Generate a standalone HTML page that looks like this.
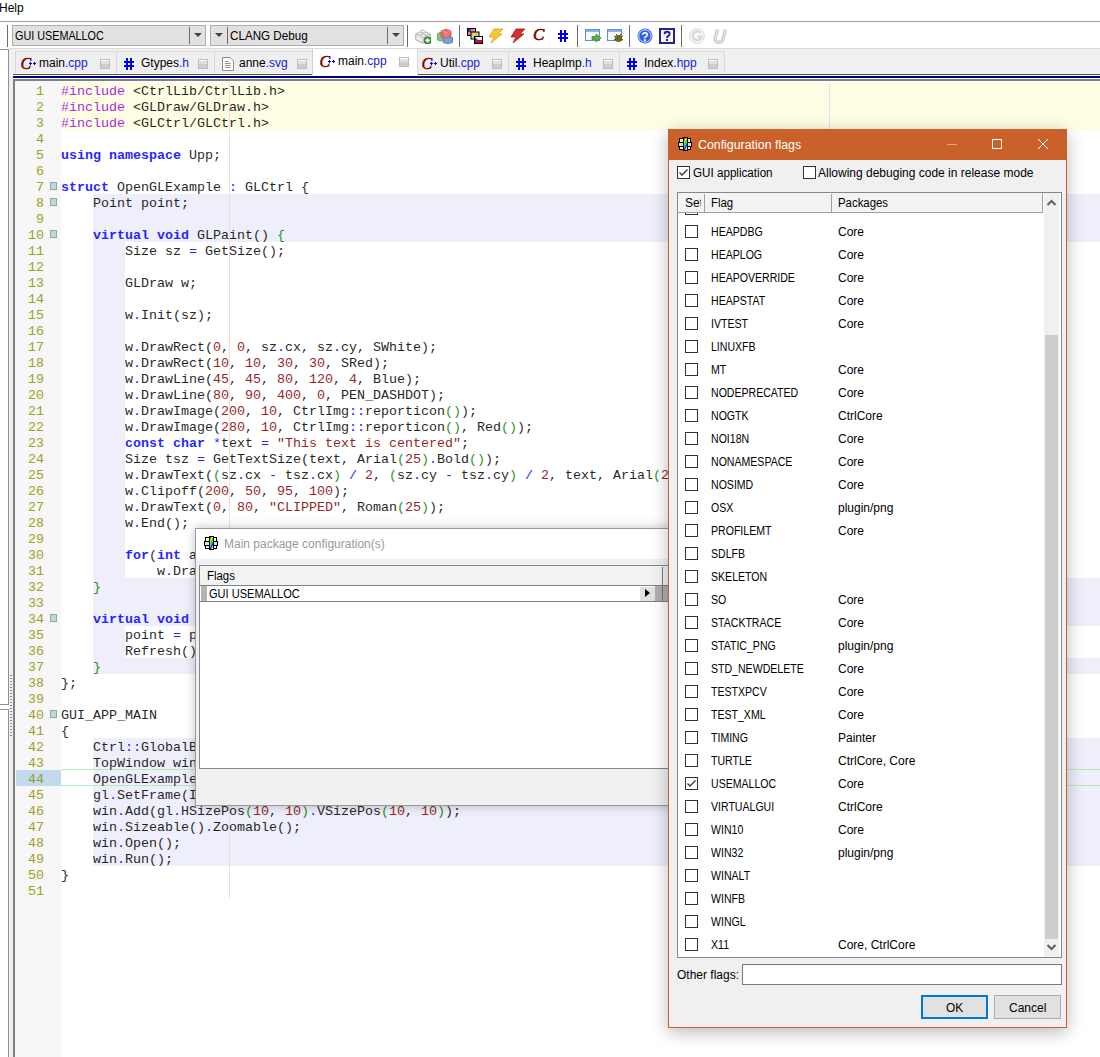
<!DOCTYPE html>
<html><head><meta charset="utf-8">
<style>
*{box-sizing:border-box}
html,body{margin:0;padding:0}
body{width:1100px;height:1057px;position:relative;overflow:hidden;background:#fff;font-family:"Liberation Sans",sans-serif;font-size:12px;color:#000}
.a{position:absolute}
.t{position:absolute;white-space:pre;line-height:14px;transform-origin:0 50%}
/* toolbar */
.combo{position:absolute;top:25px;height:21px;background:#e1e1e1;border:1px solid #adadad}
.vsep{position:absolute;width:1px;background:#6d6d6d}
.arr{position:absolute;width:0;height:0;border-left:4px solid transparent;border-right:4px solid transparent;border-top:4px solid #444}
/* tabs */
.tab{position:absolute;top:51px;height:23px;background:#efefef;border:1px solid #d9d9d9;border-top-color:#dcdcdc;border-bottom:1px solid #f8f8f8}
.tab.act{top:49px;height:26px;background:#fff;border-color:#d0d0d0;border-top:none;border-bottom:none}
.tabtxt{position:absolute;white-space:pre;line-height:14px;font-size:12px}
.tabtxt b{font-weight:normal;color:#1a1ad8}
.cls{position:absolute;width:10px;height:10px;border:1px solid #bdbdbd;background:linear-gradient(#fff 0,#fff 1px,#e0e0e0 1px,#e0e0e0 4px,#cdcdcd 4px)}
/* editor */
pre.code{position:absolute;left:61px;top:84px;margin:0;font-family:"Liberation Mono",monospace;font-size:13.333px;line-height:16px;color:#000;white-space:pre}
pre.code{opacity:.85}
pre.code i{font-style:normal}
pre.code i.kw{color:#0000ff;font-weight:bold}
pre.code i.pp{color:#9c00e6}
pre.code i.inc{color:#000}
pre.code i.num,pre.code i.str{color:#800000}
pre.code i.o{color:#0000ff}
pre.code i.g{color:#008000}
pre.ln{position:absolute;left:16px;top:84px;width:28px;margin:0;text-align:right;font-family:"Liberation Mono",monospace;font-size:13.333px;line-height:16px;color:#939000;white-space:pre;opacity:.85}
.mark{position:absolute;left:49px;width:8px;height:8px;background:#a6dada;border:1px solid #7aa}
/* dialogs */
.dlg{position:absolute;background:#f0f0f0}
.cb{position:absolute;width:13px;height:13px;border:1px solid #333;background:#fff}
.ft{position:absolute;white-space:pre;line-height:14px;font-size:12px;transform-origin:0 50%}
.fl{left:711px;transform:scaleX(.88)}
.pk{left:838px;transform:scaleX(1.0)}
</style></head><body>

<!-- menu bar -->
<div class="t" style="left:-1px;top:1px;">Help</div>
<div class="a" style="left:0;top:21px;width:1100px;height:1px;background:#a0a0a0"></div>

<!-- toolbar -->
<div class="vsep" style="left:7px;top:25px;height:22px"></div>
<div class="combo" style="left:12px;width:194px">
  <div class="t" style="left:2px;top:3px;transform:scaleX(.9)">GUI USEMALLOC</div>
  <div class="vsep" style="left:176px;top:1px;height:17px"></div>
  <div class="arr" style="left:181px;top:7px"></div>
</div>
<div class="combo" style="left:210px;width:194px">
  <div class="arr" style="left:4px;top:7px"></div>
  <div class="vsep" style="left:16px;top:1px;height:17px"></div>
  <div class="t" style="left:19px;top:3px;transform:scaleX(.97)">CLANG Debug</div>
  <div class="vsep" style="left:176px;top:1px;height:17px"></div>
  <div class="arr" style="left:181px;top:7px"></div>
</div>
<div class="vsep" style="left:407px;top:25px;height:22px"></div>
<svg class="a" style="left:415px;top:28px" width="16" height="16" viewBox="0 0 16 16"><path d="M0.8 6 L7.5 3.2 L15.2 6 L15.2 11.8 L8 15.2 L0.8 11.8 Z" fill="#ececec" stroke="#a8a8a8" stroke-width="1"/><path d="M0.8 6 L8 9 L15.2 6 M8 9 V15" stroke="#c4c4c4" fill="none"/><ellipse cx="4.6" cy="5.6" rx="2.3" ry="1.4" fill="#fafafa" stroke="#b0b0b0" stroke-width="0.8"/><ellipse cx="11.2" cy="5.6" rx="2.3" ry="1.4" fill="#fafafa" stroke="#b0b0b0" stroke-width="0.8"/><ellipse cx="7.9" cy="3.4" rx="2.3" ry="1.4" fill="#fafafa" stroke="#b0b0b0" stroke-width="0.8"/><ellipse cx="7.9" cy="7.6" rx="2.3" ry="1.4" fill="#fafafa" stroke="#b0b0b0" stroke-width="0.8"/><circle cx="12.6" cy="12.4" r="3.6" fill="#3c9a3c" stroke="#2a6e2a" stroke-width="0.8"/><path d="M10.4 12.4h4.4M12.6 10.2v4.4" stroke="#fff" stroke-width="1.6"/></svg>
<svg class="a" style="left:437px;top:28px" width="16" height="16" viewBox="0 0 16 16"><path d="M0.5 5.5 L3 4.5 L6.5 5.5 V12 L3 13 L0.5 12Z" fill="#86c286" stroke="#5a9a5a" stroke-width="0.8"/><path d="M6 9.5 L11 8 L15.5 9.5 V14.5 L11 15.8 L6 14.5Z" fill="#74a4d8" stroke="#4a7ab4" stroke-width="0.8"/><path d="M4 3 L9 1.2 L14 3 V8.5 L9 10 L4 8.5Z" fill="#ec6e6e" stroke="#c84848" stroke-width="0.8"/><path d="M4 3 L9 4.6 L14 3 M9 4.6V10" stroke="#f4a0a0" stroke-width="0.7" fill="none"/></svg>
<svg class="a" style="left:467px;top:28px" width="16" height="16" viewBox="0 0 16 16"><rect x="0.5" y="0.5" width="8" height="7" fill="#fff" stroke="#000"/><path d="M1 2h7M1 4h7M1 6h7" stroke="#d00"/><rect x="1" y="1" width="3" height="3" fill="#24a"/><rect x="4" y="4" width="8" height="7" fill="#9cf" stroke="#000"/><rect x="5" y="5" width="6" height="5" fill="#ec4"/><rect x="7.5" y="8.5" width="8" height="7" fill="#fff" stroke="#000"/><rect x="8" y="12" width="7" height="3" fill="#e00"/><path d="M8 9 L11 12 L8 15Z" fill="#24a"/></svg>
<svg class="a" style="left:488px;top:28px" width="16" height="16" viewBox="0 0 16 16"><path d="M6 1 H15 L10 6 H14 L3 15 L6 9 H1 Z" fill="#f4c830" stroke="#d8a020" stroke-width="0.8"/></svg>
<svg class="a" style="left:510px;top:28px" width="16" height="16" viewBox="0 0 16 16"><path d="M6 1 H15 L10 6 H14 L3 15 L6 9 H1 Z" fill="#d03030" stroke="#a02020" stroke-width="0.8"/></svg>
<div class="a" style="left:533px;top:26px;font-family:'Liberation Serif';font-style:italic;font-size:17px;line-height:18px;color:#7a0000;-webkit-text-stroke:0.6px #7a0000">C</div>
<svg class="a" style="left:558px;top:29px" width="11" height="14" viewBox="0 0 11 14"><path d="M3 1v12M7 1v12M0 5h10M0 9h10" stroke="#0000e8" stroke-width="2"/></svg>
<svg class="a" style="left:585px;top:29px" width="17" height="14" viewBox="0 0 17 14"><rect x="0.5" y="0.5" width="14" height="11" fill="#f4f8fc" stroke="#5b8fd0"/><rect x="1" y="1" width="13" height="2" fill="#8ab4e8"/><path d="M7 7.5 H11 V5 L16 9 L11 13 V10.5 H7Z" fill="#5cb040" stroke="#3a8a2a" stroke-width="0.8"/></svg>
<svg class="a" style="left:607px;top:29px" width="17" height="14" viewBox="0 0 17 14"><rect x="0.5" y="0.5" width="14" height="11" fill="#f4f8fc" stroke="#5b8fd0"/><rect x="1" y="1" width="13" height="2" fill="#8ab4e8"/><ellipse cx="11.5" cy="9.5" rx="3.5" ry="3.5" fill="#6b6a10"/><path d="M7 7l2 1M7 11l2-1M16 7l-2 1M16 11l-2-1M9 5l1.5 2M14 5l-1.5 2" stroke="#4a4a00"/></svg>
<svg class="a" style="left:637px;top:28px" width="16" height="16" viewBox="0 0 16 16"><circle cx="8" cy="8" r="7.5" fill="#2f5fe0"/><circle cx="8" cy="8" r="6.2" fill="none" stroke="#fff" stroke-width="0.8"/><text x="8" y="12.5" text-anchor="middle" font-family="Liberation Sans" font-weight="bold" font-size="12" fill="#fff">?</text></svg>
<svg class="a" style="left:659px;top:28px" width="16" height="16" viewBox="0 0 16 16"><rect x="1" y="1" width="14" height="14" fill="#f6f6ee" stroke="#24248c" stroke-width="2"/><path d="M5.6 6.2 Q5.6 3.8 8 3.8 Q10.6 3.8 10.6 6 Q10.6 7.4 9 8.2 Q8 8.7 8 10" fill="none" stroke="#24248c" stroke-width="2"/><rect x="7" y="11" width="2" height="2" fill="#24248c"/></svg>
<svg class="a" style="left:689px;top:28px" width="16" height="16" viewBox="0 0 16 16"><circle cx="8" cy="8" r="7.3" fill="#fafafa" stroke="#d4d4d4" stroke-width="1"/><path d="M11.6 5.2 A4.4 4.4 0 1 0 12.4 8.5 H8.2" fill="none" stroke="#d6d6d6" stroke-width="2.2"/><path d="M4.2 6 A4.4 4.4 0 0 0 6 11.8" fill="none" stroke="#d8e0d0" stroke-width="2.2"/><path d="M12.4 8.5 A4.4 4.4 0 0 1 9.5 12" fill="none" stroke="#d0d8e4" stroke-width="2.2"/></svg>
<svg class="a" style="left:712px;top:28px" width="15" height="16" viewBox="0 0 15 16"><path d="M5.5 1.5 L3.2 9.5 Q2.2 14.2 6.8 14.2 Q10.6 14.2 11.4 9.5 L13.4 1.5" fill="none" stroke="#d4cccc" stroke-width="3.6"/><path d="M5.5 1.5 L3.2 9.5 Q2.2 14.2 6.8 14.2 Q10.6 14.2 11.4 9.5 L13.4 1.5" fill="none" stroke="#eeeaea" stroke-width="1"/></svg>
<div class="vsep" style="left:459px;top:25px;height:22px"></div>
<div class="vsep" style="left:577px;top:25px;height:22px"></div>
<div class="vsep" style="left:629px;top:25px;height:22px"></div>
<div class="vsep" style="left:681px;top:25px;height:22px"></div>

<!-- left panel -->
<div class="a" style="left:0;top:49px;width:9px;height:656px;border:1px solid #8d9199;border-left:none;background:#fff"></div>
<div class="a" style="left:0;top:709px;width:9px;height:400px;border:1px solid #8d9199;border-left:none;background:#fff"></div>
<div class="a" style="left:9px;top:48px;width:4px;height:1009px;background:#f0f0f0"></div>

<!-- tab bar -->
<div class="a" style="left:9px;top:48px;width:1091px;height:1px;background:#dadada"></div>
<div class="a" style="left:9px;top:49px;width:1091px;height:25px;background:#f0f0f0"></div>
<div class="a" style="left:13px;top:75px;width:1087px;height:4px;background:#fff"></div>
<div class="tab" style="left:15px;width:102px"></div>
<svg class="a" style="left:21px;top:56px" width="17" height="15" viewBox="0 0 17 15"><text x="-0.5" y="12.6" style="font-family:'Liberation Serif';font-style:italic;font-size:16px" fill="#7a0000" stroke="#7a0000" stroke-width="0.5">C</text><path d="M8 7.5h3M9.5 6v3M12 7.5h3M13.5 6v3" stroke="#0000ff" stroke-width="1.1"/></svg>
<div class="tabtxt" style="left:39px;top:56px">main<b>.cpp</b></div>
<div class="cls" style="left:100px;top:59px"></div>
<div class="tab" style="left:116px;width:99px"></div>
<svg class="a" style="left:124px;top:57px" width="11" height="14" viewBox="0 0 11 14"><path d="M3 1v12M7 1v12M0 5h10M0 9h10" stroke="#0000e8" stroke-width="2"/></svg>
<div class="tabtxt" style="left:141px;top:56px">Gtypes<b>.h</b></div>
<div class="cls" style="left:198px;top:59px"></div>
<div class="tab" style="left:214px;width:99px"></div>
<svg class="a" style="left:222px;top:57px" width="12" height="14" viewBox="0 0 12 14"><path d="M0.5 0.5H8L11.5 4V13.5H0.5Z" fill="#fff" stroke="#8c8c8c" stroke-width="1"/><path d="M2.8 4.5h3.8M2.8 6.5h6M2.8 8.5h6M2.8 10.5h6" stroke="#8a8a8a" stroke-width="0.9"/></svg>
<div class="tabtxt" style="left:239px;top:56px">anne<b>.svg</b></div>
<div class="cls" style="left:297px;top:59px"></div>
<div class="tab act" style="left:312px;width:106px"></div>
<svg class="a" style="left:320px;top:54px" width="17" height="15" viewBox="0 0 17 15"><text x="-0.5" y="12.6" style="font-family:'Liberation Serif';font-style:italic;font-size:16px" fill="#7a0000" stroke="#7a0000" stroke-width="0.5">C</text><path d="M8 7.5h3M9.5 6v3M12 7.5h3M13.5 6v3" stroke="#0000ff" stroke-width="1.1"/></svg>
<div class="tabtxt" style="left:338px;top:54px">main<b>.cpp</b></div>
<div class="cls" style="left:399px;top:57px"></div>
<div class="tab" style="left:417px;width:92px"></div>
<svg class="a" style="left:422px;top:56px" width="17" height="15" viewBox="0 0 17 15"><text x="-0.5" y="12.6" style="font-family:'Liberation Serif';font-style:italic;font-size:16px" fill="#7a0000" stroke="#7a0000" stroke-width="0.5">C</text><path d="M8 7.5h3M9.5 6v3M12 7.5h3M13.5 6v3" stroke="#0000ff" stroke-width="1.1"/></svg>
<div class="tabtxt" style="left:440px;top:56px">Util<b>.cpp</b></div>
<div class="cls" style="left:492px;top:59px"></div>
<div class="tab" style="left:508px;width:112px"></div>
<svg class="a" style="left:516px;top:57px" width="11" height="14" viewBox="0 0 11 14"><path d="M3 1v12M7 1v12M0 5h10M0 9h10" stroke="#0000e8" stroke-width="2"/></svg>
<div class="tabtxt" style="left:533px;top:56px">HeapImp<b>.h</b></div>
<div class="cls" style="left:603px;top:59px"></div>
<div class="tab" style="left:619px;width:106px"></div>
<svg class="a" style="left:627px;top:57px" width="11" height="14" viewBox="0 0 11 14"><path d="M3 1v12M7 1v12M0 5h10M0 9h10" stroke="#0000e8" stroke-width="2"/></svg>
<div class="tabtxt" style="left:644px;top:56px">Index<b>.hpp</b></div>
<div class="cls" style="left:708px;top:59px"></div>
<div class="a" style="left:13px;top:74px;width:299px;height:1px;background:#505050"></div>
<div class="a" style="left:418px;top:74px;width:682px;height:1px;background:#505050"></div>
<div class="a" style="left:13px;top:76px;width:1087px;height:2px;background:#000080"></div>
<div class="a" style="left:10px;top:674px;width:2px;height:62px;background:repeating-linear-gradient(#f0f0f0 0 1px,#8a8a8a 1px 2px,#f0f0f0 2px 3px)"></div>

<!-- editor -->
<div class="a" style="left:13px;top:79px;width:1087px;height:978px;border-left:2px solid #7c8088;border-top:2px solid #7c8088;background:#fff"></div>
<div class="a" style="left:15px;top:81px;width:46px;height:976px;background:#f7f7f7"></div>
<div class="a" style="left:61px;top:82px;width:1039px;height:48px;background:#fefee4"></div>
<div class="a" style="left:93px;top:194px;width:1007px;height:480px;background:#efeffc"></div>
<div class="a" style="left:125px;top:242px;width:975px;height:336px;background:#fff"></div>
<div class="a" style="left:125px;top:626px;width:975px;height:32px;background:#fff"></div>
<div class="a" style="left:93px;top:738px;width:1007px;height:128px;background:#efeffc"></div>
<div class="a" style="left:61px;top:769px;width:1039px;height:1px;background:#b8e8b8"></div>
<div class="a" style="left:61px;top:785px;width:1039px;height:1px;background:#b8e8b8"></div>
<div class="a" style="left:16px;top:770px;width:45px;height:16px;background:#c3d9ee"></div>
<div class="a" style="left:229px;top:82px;width:1px;height:816px;background:#f5dcd6"></div>
<div class="a" style="left:829px;top:82px;width:1px;height:816px;background:#e2e2ec"></div>
<pre class="ln">1
2
3
4
5
6
7
8
9
10
11
12
13
14
15
16
17
18
19
20
21
22
23
24
25
26
27
28
29
30
31
32
33
34
35
36
37
38
39
40
41
42
43
44
45
46
47
48
49
50
51</pre>
<div class="a" style="left:50px;top:182px;width:7px;height:8px;border:1px solid #a0a0a0;background:#a8e0e0"></div>
<div class="a" style="left:50px;top:198px;width:7px;height:8px;border:1px solid #a0a0a0;background:#a8e0e0"></div>
<div class="a" style="left:50px;top:230px;width:7px;height:8px;border:1px solid #a0a0a0;background:#a8e0e0"></div>
<div class="a" style="left:50px;top:614px;width:7px;height:8px;border:1px solid #a0a0a0;background:#a8e0e0"></div>
<div class="a" style="left:50px;top:710px;width:7px;height:8px;border:1px solid #a0a0a0;background:#a8e0e0"></div>
<pre class="code"><i class="pp">#include</i> <i class="inc">&lt;CtrlLib/CtrlLib.h&gt;</i>
<i class="pp">#include</i> <i class="inc">&lt;GLDraw/GLDraw.h&gt;</i>
<i class="pp">#include</i> <i class="inc">&lt;GLCtrl/GLCtrl.h&gt;</i>

<i class="kw">using</i> <i class="kw">namespace</i> Upp;

<i class="kw">struct</i> OpenGLExample <i class="o">:</i> GLCtrl {
    Point point;

    <i class="kw">virtual</i> <i class="kw">void</i> GLPaint() <i class="g">{</i>
        Size sz <i class="o">=</i> GetSize();

        GLDraw w;

        w<i class="o">.</i>Init(sz);

        w<i class="o">.</i>DrawRect(<i class="num">0</i>, <i class="num">0</i>, sz<i class="o">.</i>cx, sz<i class="o">.</i>cy, SWhite);
        w<i class="o">.</i>DrawRect(<i class="num">10</i>, <i class="num">10</i>, <i class="num">30</i>, <i class="num">30</i>, SRed);
        w<i class="o">.</i>DrawLine(<i class="num">45</i>, <i class="num">45</i>, <i class="num">80</i>, <i class="num">120</i>, <i class="num">4</i>, Blue);
        w<i class="o">.</i>DrawLine(<i class="num">80</i>, <i class="num">90</i>, <i class="num">400</i>, <i class="num">0</i>, PEN_DASHDOT);
        w<i class="o">.</i>DrawImage(<i class="num">200</i>, <i class="num">10</i>, CtrlImg<i class="o">:</i><i class="o">:</i>reporticon<i class="g">(</i><i class="g">)</i>);
        w<i class="o">.</i>DrawImage(<i class="num">280</i>, <i class="num">10</i>, CtrlImg<i class="o">:</i><i class="o">:</i>reporticon<i class="g">(</i><i class="g">)</i>, Red<i class="g">(</i><i class="g">)</i>);
        <i class="kw">const</i> <i class="kw">char</i> <i class="o">*</i>text <i class="o">=</i> <i class="str">&quot;This text is centered&quot;</i>;
        Size tsz <i class="o">=</i> GetTextSize(text, Arial<i class="g">(</i><i class="num">25</i><i class="g">)</i><i class="o">.</i>Bold<i class="g">(</i><i class="g">)</i>);
        w<i class="o">.</i>DrawText(<i class="g">(</i>sz<i class="o">.</i>cx <i class="o">-</i> tsz<i class="o">.</i>cx<i class="g">)</i> <i class="o">/</i> <i class="num">2</i>, <i class="g">(</i>sz<i class="o">.</i>cy <i class="o">-</i> tsz<i class="o">.</i>cy<i class="g">)</i> <i class="o">/</i> <i class="num">2</i>, text, Arial<i class="g">(</i><i class="num">25</i><i class="g">)</i><i class="o">.</i>Bold<i class="g">(</i><i class="g">)</i>, SBlue);
        w<i class="o">.</i>Clipoff(<i class="num">200</i>, <i class="num">50</i>, <i class="num">95</i>, <i class="num">100</i>);
        w<i class="o">.</i>DrawText(<i class="num">0</i>, <i class="num">80</i>, <i class="str">&quot;CLIPPED&quot;</i>, Roman<i class="g">(</i><i class="num">25</i><i class="g">)</i>);
        w<i class="o">.</i>End();

        <i class="kw">for</i>(<i class="kw">int</i> a <i class="o">=</i> <i class="num">0</i>; a <i class="o">&lt;</i> <i class="num">10</i>; a<i class="o">+</i><i class="o">+</i>)
            w<i class="o">.</i>DrawRect(a <i class="o">*</i> <i class="num">10</i>, <i class="num">200</i>, <i class="num">5</i>, <i class="num">5</i>, SGreen);
    <i class="g">}</i>

    <i class="kw">virtual</i> <i class="kw">void</i> MouseMove(Point p, <i class="kw">dword</i>) <i class="g">{</i>
        point <i class="o">=</i> p;
        Refresh();
    <i class="g">}</i>
};

GUI_APP_MAIN
{
    Ctrl<i class="o">:</i><i class="o">:</i>GlobalBackPaint();
    TopWindow win;
    OpenGLExample gl;
    gl<i class="o">.</i>SetFrame(InsetFrame<i class="g">(</i><i class="g">)</i>);
    win<i class="o">.</i>Add(gl<i class="o">.</i>HSizePos<i class="g">(</i><i class="num">10</i>, <i class="num">10</i><i class="g">)</i><i class="o">.</i>VSizePos<i class="g">(</i><i class="num">10</i>, <i class="num">10</i><i class="g">)</i>);
    win<i class="o">.</i>Sizeable()<i class="o">.</i>Zoomable();
    win<i class="o">.</i>Open();
    win<i class="o">.</i>Run();
}
</pre>

<div class="a" style="left:195px;top:528px;width:520px;height:278px;background:#f0f0f0;border:1px solid #9a9a9a;box-shadow:0 0 10px rgba(0,0,0,.25)"></div>
<div class="a" style="left:196px;top:529px;width:520px;height:30px;background:#fff"></div>
<svg class="a" style="left:204px;top:536px" width="14" height="14" viewBox="0 0 14 14" shape-rendering="crispEdges"><defs><linearGradient id="rb1" x1="0" y1="0" x2="0.5" y2="1"><stop offset="0" stop-color="#ddd"/><stop offset=".12" stop-color="#f00"/><stop offset=".3" stop-color="#ff0"/><stop offset=".5" stop-color="#0d0"/><stop offset=".65" stop-color="#0ff"/><stop offset=".82" stop-color="#00f"/><stop offset="1" stop-color="#ddd"/></linearGradient></defs><rect x="1" y="1" width="12" height="12" fill="#000"/><rect x="0" y="5" width="14" height="5" fill="#000"/><rect x="5" y="0" width="5" height="14" fill="#000"/><rect x="2" y="2" width="3" height="3" fill="#fff"/><rect x="3" y="3" width="2" height="2" fill="#ff0"/><rect x="1" y="6" width="4" height="3" fill="#ddd"/><rect x="2" y="10" width="3" height="2" fill="#fff"/><rect x="3" y="10" width="2" height="1" fill="#ff0"/><rect x="10" y="2" width="2" height="3" fill="#fff"/><rect x="10" y="3" width="1" height="2" fill="#ff0"/><rect x="10" y="6" width="3" height="3" fill="#ddd"/><rect x="10" y="10" width="2" height="2" fill="#fff"/><rect x="10" y="10" width="1" height="1" fill="#ff0"/><rect x="6" y="1" width="3" height="12" fill="url(#rb1)"/></svg>
<div class="t" style="left:224px;top:537px;color:#999;transform:scaleX(1.0)">Main package configuration(s)</div>
<div class="a" style="left:199px;top:565px;width:520px;height:204px;background:#fff;border:1px solid #828790"></div>
<div class="a" style="left:200px;top:566px;width:520px;height:20px;background:#f3f3f3;border-bottom:1px solid #808080"></div>
<div class="a" style="left:662px;top:567px;width:1px;height:18px;background:#7a7a7a"></div>
<div class="t" style="left:207px;top:569px;transform:scaleX(.95)">Flags</div>
<div class="a" style="left:200px;top:586px;width:520px;height:16px;background:#fff;border-bottom:1px solid #808080"></div>
<div class="a" style="left:201px;top:586px;width:6px;height:15px;background:#b4b4b4"></div>
<div class="t" style="left:209px;top:587px;transform:scaleX(.92)">GUI USEMALLOC</div>
<div class="a" style="left:640px;top:587px;width:15px;height:14px;background:#e1e1e1"></div>
<div class="a" style="left:645px;top:589px;width:0;height:0;border-top:4.5px solid transparent;border-bottom:4.5px solid transparent;border-left:5px solid #000"></div>
<div class="a" style="left:655px;top:586px;width:20px;height:15px;background:#b0b0b0"></div>
<div class="a" style="left:662px;top:586px;width:1px;height:15px;background:#777"></div>
<div class="a" style="left:668px;top:129px;width:399px;height:899px;background:#f0f0f0;border:1px solid #c9612a;box-shadow:0 4px 16px rgba(0,0,0,.28)"></div>
<div class="a" style="left:668px;top:129px;width:399px;height:31px;background:#ca612a"></div>
<svg class="a" style="left:678px;top:137px" width="14" height="14" viewBox="0 0 14 14" shape-rendering="crispEdges"><defs><linearGradient id="rb2" x1="0" y1="0" x2="0.5" y2="1"><stop offset="0" stop-color="#ddd"/><stop offset=".12" stop-color="#f00"/><stop offset=".3" stop-color="#ff0"/><stop offset=".5" stop-color="#0d0"/><stop offset=".65" stop-color="#0ff"/><stop offset=".82" stop-color="#00f"/><stop offset="1" stop-color="#ddd"/></linearGradient></defs><rect x="1" y="1" width="12" height="12" fill="#000"/><rect x="0" y="5" width="14" height="5" fill="#000"/><rect x="5" y="0" width="5" height="14" fill="#000"/><rect x="2" y="2" width="3" height="3" fill="#fff"/><rect x="3" y="3" width="2" height="2" fill="#ff0"/><rect x="1" y="6" width="4" height="3" fill="#ddd"/><rect x="2" y="10" width="3" height="2" fill="#fff"/><rect x="3" y="10" width="2" height="1" fill="#ff0"/><rect x="10" y="2" width="2" height="3" fill="#fff"/><rect x="10" y="3" width="1" height="2" fill="#ff0"/><rect x="10" y="6" width="3" height="3" fill="#ddd"/><rect x="10" y="10" width="2" height="2" fill="#fff"/><rect x="10" y="10" width="1" height="1" fill="#ff0"/><rect x="6" y="1" width="3" height="12" fill="url(#rb2)"/></svg>
<div class="t" style="left:698px;top:138px;color:#fff;transform:scaleX(1.03)">Configuration flags</div>
<div class="a" style="left:947px;top:144px;width:10px;height:1px;background:#e4a686"></div>
<div class="a" style="left:992px;top:139px;width:10px;height:10px;border:1px solid #fff"></div>
<svg class="a" style="left:1037px;top:138px" width="12" height="12" viewBox="0 0 12 12"><path d="M1 1L11 11M11 1L1 11" stroke="#fff" stroke-width="1"/></svg>
<div class="cb" style="left:677px;top:166px"><svg width="11" height="11" viewBox="0 0 11 11" style="position:absolute;left:0;top:0"><path d="M1.5 5.5 L4 8 L9.5 2.5" stroke="#333" stroke-width="1.3" fill="none"/></svg></div>
<div class="t" style="left:693px;top:166px;transform:scaleX(.97)">GUI application</div>
<div class="cb" style="left:803px;top:166px"></div>
<div class="t" style="left:818px;top:166px;transform:scaleX(1.0)">Allowing debuging code in release mode</div>
<div class="a" style="left:677px;top:192px;width:385px;height:766px;background:#fff;border:1px solid #828790;overflow:hidden">
<div style="position:absolute;left:-678px;top:-193px;width:1100px;height:1057px">
<div class="cb" style="left:685px;top:202px"></div>
<div class="cb" style="left:685px;top:225px"></div>
<div class="ft fl" style="top:225px">HEAPDBG</div>
<div class="ft pk" style="top:225px">Core</div>
<div class="cb" style="left:685px;top:248px"></div>
<div class="ft fl" style="top:248px">HEAPLOG</div>
<div class="ft pk" style="top:248px">Core</div>
<div class="cb" style="left:685px;top:271px"></div>
<div class="ft fl" style="top:271px">HEAPOVERRIDE</div>
<div class="ft pk" style="top:271px">Core</div>
<div class="cb" style="left:685px;top:294px"></div>
<div class="ft fl" style="top:294px">HEAPSTAT</div>
<div class="ft pk" style="top:294px">Core</div>
<div class="cb" style="left:685px;top:317px"></div>
<div class="ft fl" style="top:317px">IVTEST</div>
<div class="ft pk" style="top:317px">Core</div>
<div class="cb" style="left:685px;top:340px"></div>
<div class="ft fl" style="top:340px">LINUXFB</div>
<div class="cb" style="left:685px;top:363px"></div>
<div class="ft fl" style="top:363px">MT</div>
<div class="ft pk" style="top:363px">Core</div>
<div class="cb" style="left:685px;top:386px"></div>
<div class="ft fl" style="top:386px">NODEPRECATED</div>
<div class="ft pk" style="top:386px">Core</div>
<div class="cb" style="left:685px;top:409px"></div>
<div class="ft fl" style="top:409px">NOGTK</div>
<div class="ft pk" style="top:409px">CtrlCore</div>
<div class="cb" style="left:685px;top:432px"></div>
<div class="ft fl" style="top:432px">NOI18N</div>
<div class="ft pk" style="top:432px">Core</div>
<div class="cb" style="left:685px;top:455px"></div>
<div class="ft fl" style="top:455px">NONAMESPACE</div>
<div class="ft pk" style="top:455px">Core</div>
<div class="cb" style="left:685px;top:478px"></div>
<div class="ft fl" style="top:478px">NOSIMD</div>
<div class="ft pk" style="top:478px">Core</div>
<div class="cb" style="left:685px;top:501px"></div>
<div class="ft fl" style="top:501px">OSX</div>
<div class="ft pk" style="top:501px">plugin/png</div>
<div class="cb" style="left:685px;top:524px"></div>
<div class="ft fl" style="top:524px">PROFILEMT</div>
<div class="ft pk" style="top:524px">Core</div>
<div class="cb" style="left:685px;top:547px"></div>
<div class="ft fl" style="top:547px">SDLFB</div>
<div class="cb" style="left:685px;top:570px"></div>
<div class="ft fl" style="top:570px">SKELETON</div>
<div class="cb" style="left:685px;top:593px"></div>
<div class="ft fl" style="top:593px">SO</div>
<div class="ft pk" style="top:593px">Core</div>
<div class="cb" style="left:685px;top:616px"></div>
<div class="ft fl" style="top:616px">STACKTRACE</div>
<div class="ft pk" style="top:616px">Core</div>
<div class="cb" style="left:685px;top:639px"></div>
<div class="ft fl" style="top:639px">STATIC_PNG</div>
<div class="ft pk" style="top:639px">plugin/png</div>
<div class="cb" style="left:685px;top:662px"></div>
<div class="ft fl" style="top:662px">STD_NEWDELETE</div>
<div class="ft pk" style="top:662px">Core</div>
<div class="cb" style="left:685px;top:685px"></div>
<div class="ft fl" style="top:685px">TESTXPCV</div>
<div class="ft pk" style="top:685px">Core</div>
<div class="cb" style="left:685px;top:708px"></div>
<div class="ft fl" style="top:708px">TEST_XML</div>
<div class="ft pk" style="top:708px">Core</div>
<div class="cb" style="left:685px;top:731px"></div>
<div class="ft fl" style="top:731px">TIMING</div>
<div class="ft pk" style="top:731px">Painter</div>
<div class="cb" style="left:685px;top:754px"></div>
<div class="ft fl" style="top:754px">TURTLE</div>
<div class="ft pk" style="top:754px">CtrlCore, Core</div>
<div class="cb" style="left:685px;top:777px"><svg width="11" height="11" viewBox="0 0 11 11" style="position:absolute;left:0;top:0"><path d="M1.5 5.5 L4 8 L9.5 2.5" stroke="#333" stroke-width="1.3" fill="none"/></svg></div>
<div class="ft fl" style="top:777px">USEMALLOC</div>
<div class="ft pk" style="top:777px">Core</div>
<div class="cb" style="left:685px;top:800px"></div>
<div class="ft fl" style="top:800px">VIRTUALGUI</div>
<div class="ft pk" style="top:800px">CtrlCore</div>
<div class="cb" style="left:685px;top:823px"></div>
<div class="ft fl" style="top:823px">WIN10</div>
<div class="ft pk" style="top:823px">Core</div>
<div class="cb" style="left:685px;top:846px"></div>
<div class="ft fl" style="top:846px">WIN32</div>
<div class="ft pk" style="top:846px">plugin/png</div>
<div class="cb" style="left:685px;top:869px"></div>
<div class="ft fl" style="top:869px">WINALT</div>
<div class="cb" style="left:685px;top:892px"></div>
<div class="ft fl" style="top:892px">WINFB</div>
<div class="cb" style="left:685px;top:915px"></div>
<div class="ft fl" style="top:915px">WINGL</div>
<div class="cb" style="left:685px;top:938px"></div>
<div class="ft fl" style="top:938px">X11</div>
<div class="ft pk" style="top:938px">Core, CtrlCore</div>
</div></div>
<div class="a" style="left:678px;top:193px;width:365px;height:20px;background:#f3f3f3;border-bottom:1px solid #a0a0a0;border-right:1px solid #a0a0a0"></div>
<div class="a" style="left:704px;top:194px;width:1px;height:18px;background:#a0a0a0"></div>
<div class="a" style="left:831px;top:194px;width:1px;height:18px;background:#a0a0a0"></div>
<div class="a" style="left:678px;top:193px;width:23px;height:19px;overflow:hidden"><div class="t" style="left:7px;top:3px">Set</div></div>
<div class="t" style="left:711px;top:196px;transform:scaleX(.95)">Flag</div>
<div class="t" style="left:838px;top:196px;transform:scaleX(.95)">Packages</div>
<div class="a" style="left:1044px;top:193px;width:15px;height:764px;background:#f0f0f0"></div>
<div class="a" style="left:1045px;top:335px;width:13px;height:604px;background:#cdcdcd"></div>
<svg class="a" style="left:1046px;top:199px" width="11" height="8" viewBox="0 0 11 8"><path d="M1.5 6L5.5 2L9.5 6" stroke="#606060" stroke-width="2" fill="none"/></svg>
<svg class="a" style="left:1046px;top:943px" width="11" height="8" viewBox="0 0 11 8"><path d="M1.5 2L5.5 6L9.5 2" stroke="#606060" stroke-width="2" fill="none"/></svg>
<div class="t" style="left:677px;top:968px;transform:scaleX(1.0)">Other flags:</div>
<div class="a" style="left:742px;top:964px;width:320px;height:21px;background:#fff;border:1px solid #7a7a7a"></div>
<div class="a" style="left:921px;top:995px;width:67px;height:24px;background:#e1e1e1;border:2px solid #0078d7"></div>
<div class="t" style="left:946px;top:1001px">OK</div>
<div class="a" style="left:994px;top:995px;width:67px;height:24px;background:#e1e1e1;border:1px solid #adadad"></div>
<div class="t" style="left:1009px;top:1001px;transform:scaleX(1.0)">Cancel</div>
</body></html>
